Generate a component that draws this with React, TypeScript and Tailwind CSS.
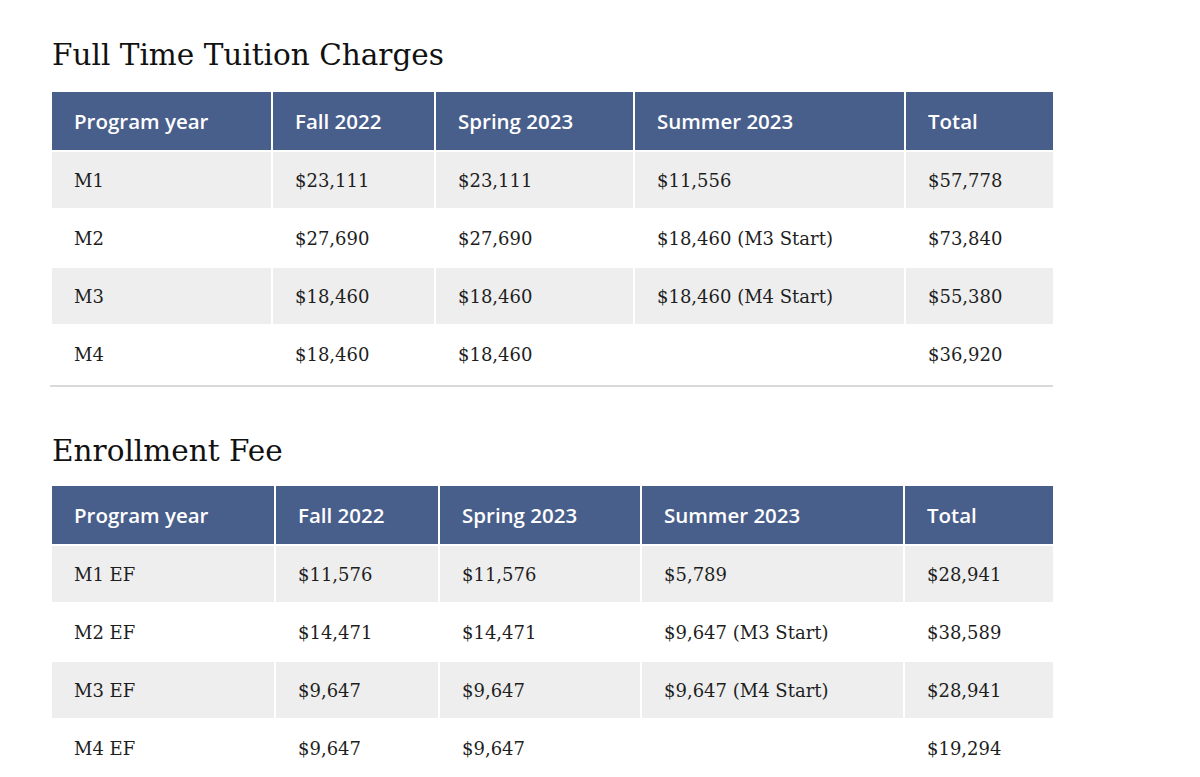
const serif = "font-['DejaVu_Serif','Liberation_Serif',serif]";
const sans = "font-['Open_Sans','Noto_Sans',sans-serif]";

type Row = string[];

const tuition: Row[] = [
  ["M1", "$23,111", "$23,111", "$11,556", "$57,778"],
  ["M2", "$27,690", "$27,690", "$18,460 (M3 Start)", "$73,840"],
  ["M3", "$18,460", "$18,460", "$18,460 (M4 Start)", "$55,380"],
  ["M4", "$18,460", "$18,460", "", "$36,920"],
];

const enrollment: Row[] = [
  ["M1 EF", "$11,576", "$11,576", "$5,789", "$28,941"],
  ["M2 EF", "$14,471", "$14,471", "$9,647 (M3 Start)", "$38,589"],
  ["M3 EF", "$9,647", "$9,647", "$9,647 (M4 Start)", "$28,941"],
  ["M4 EF", "$9,647", "$9,647", "", "$19,294"],
];

const headers = ["Program year", "Fall 2022", "Spring 2023", "Summer 2023", "Total"];

function FeeTable({ rows, widths }: { rows: Row[]; widths: number[] }) {
  return (
    <table className="w-[1001px] table-fixed border-collapse">
      <colgroup>
        {widths.map((w, i) => (
          <col key={i} style={{ width: w }} />
        ))}
      </colgroup>
      <thead>
        <tr className="h-[60px] bg-[#485e8b]">
          {headers.map((h) => (
            <th
              key={h}
              className={`border-2 border-white px-[22px] text-left text-[20.5px] font-semibold text-white ${sans}`}
            >
              {h}
            </th>
          ))}
        </tr>
      </thead>
      <tbody>
        {rows.map((r, i) => (
          <tr key={i} className={`h-[58px] ${i % 2 === 0 ? "bg-[#eeeeee]" : "bg-white"}`}>
            {r.map((c, j) => (
              <td
                key={j}
                className={`border-2 border-white px-[22px] text-[18px] text-[#1e1e1e] ${serif}`}
              >
                {c}
              </td>
            ))}
          </tr>
        ))}
      </tbody>
    </table>
  );
}

export default function App() {
  return (
    <div className="min-h-[777px] bg-white pl-[50px] pt-[33px]">
      <h2 className={`pl-[2px] text-[29.5px] leading-[44px] text-[#111] ${serif}`}>
        Full Time Tuition Charges
      </h2>
      <div className="mt-[13px] w-[1003px] border-b-2 border-[#d9d9d9] pb-px">
        <FeeTable rows={tuition} widths={[221, 163, 199, 271, 149]} />
      </div>
      <h2 className={`mt-[42px] pl-[2px] text-[29.5px] leading-[44px] text-[#111] ${serif}`}>
        Enrollment Fee
      </h2>
      <div className="mt-[11px]">
        <FeeTable rows={enrollment} widths={[224, 164, 202, 263, 150]} />
      </div>
    </div>
  );
}
